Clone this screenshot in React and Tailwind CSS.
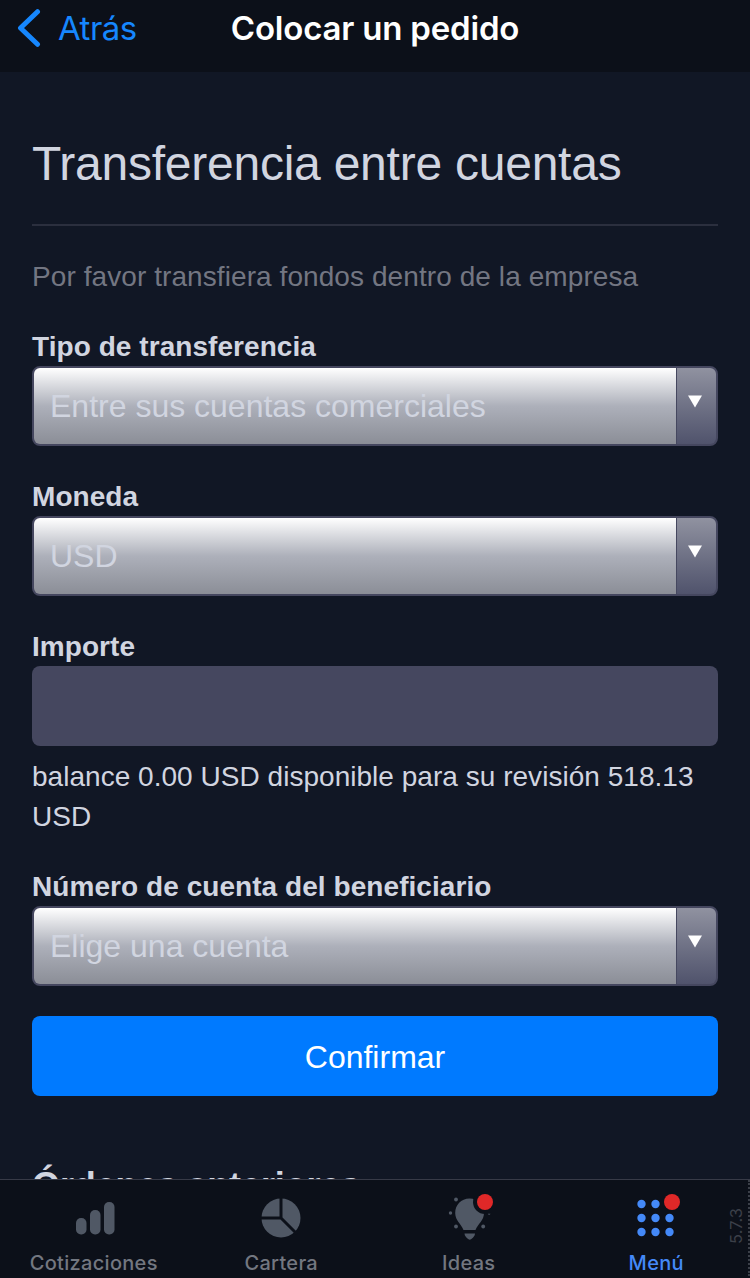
import { useState } from 'react';

const labelClass = "block h-10 pt-px leading-10 text-[28px] font-bold tracking-[0.06px] text-[#d1d5e0]";

const BarsIcon = () => (
  <svg width="44" height="44" viewBox="0 0 44 44" fill="currentColor">
    <rect x="4" y="22" width="10.500" height="16.500" rx="5" />
    <rect x="18" y="14" width="10.500" height="24.500" rx="5" />
    <rect x="32" y="6" width="10.500" height="32.500" rx="5" />
  </svg>
);

const PieIcon = () => (
  <svg width="44" height="44" viewBox="0 0 44 44">
    <circle cx="22" cy="22" r="19.500" fill="currentColor" />
    <path d="M22 0V22H0M22 22L38 38" fill="none" stroke="#0c1019" strokeWidth="3" />
  </svg>
);

const BulbIcon = () => (
  <svg width="44" height="44" viewBox="0 0 44 44" fill="currentColor">
    <path d="M22.500 2.500C14 2.500 8.200 9 8.200 17C8.200 24.500 14 27.500 16.500 34H28.500C31 27.500 37 24.500 37 17C37 9 31 2.500 22.500 2.500Z" />
    <path d="M17.500 37.500H28C28 40 26 41.500 25 42.500C24 44 21.500 44 20.500 42.500C19.500 41.500 17.500 40 17.500 37.500Z" />
    <circle cx="9" cy="3.500" r="1.900" />
    <circle cx="3.500" cy="17" r="1.700" />
    <circle cx="9" cy="30.500" r="1.900" />
    <circle cx="36.200" cy="30.500" r="1.900" />
    <circle cx="38" cy="6" r="12" fill="#0c1019" />
    <path d="M40.800 17.800H43.500A1.500 1.500 0 0 1 40.800 17.800Z" />
  </svg>
);

const GridIcon = () => (
  <svg width="44" height="44" viewBox="0 0 44 44" fill="currentColor">
    {[8, 22, 36].map((y) => [7.500, 21.500, 35.500].map((x) => <circle key={`${x}-${y}`} cx={x} cy={y} r="4.200" />))}
  </svg>
);

const tabs = [
  { id: 'quotes', label: 'Cotizaciones', icon: BarsIcon },
  { id: 'wallet', label: 'Cartera', icon: PieIcon },
  { id: 'ideas', label: 'Ideas', icon: BulbIcon, badge: true },
  { id: 'menu', label: 'Menú', icon: GridIcon, badge: true },
];

const SelectField = ({ label, value }) => (
  <div className="mb-[30px]">
    <label className={labelClass}>{label}</label>
    <button
      type="button"
      className="flex h-20 w-full overflow-hidden rounded-lg border-2 border-[#45475f] bg-[#45475f] text-left"
    >
      <span className="flex-1 bg-linear-to-b from-white via-[#adb0ba] via-50% to-[#8b8e97] pl-4 text-[32px] leading-[76px] text-[#d1d5e0]">
        {value}
      </span>
      <span className="flex w-10 border-l border-[#45475f] bg-linear-to-b from-[#9092a0] to-[#50536c] pt-[27px] pl-[11px]">
        <svg width="14" height="13" viewBox="0 0 14 13" fill="white"><path d="M0 0.500H14L7 12.500Z" /></svg>
      </span>
    </button>
  </div>
);

const App = () => {
  const [activeTab, setActiveTab] = useState('menu');
  const [amount, setAmount] = useState('');

  return (
    <div className="flex h-[1278px] w-[750px] flex-col overflow-hidden bg-[#111725] font-['Liberation_Sans',sans-serif] text-[#d1d5e0]">
      {/* Header */}
      <header className="grid h-[72px] shrink-0 grid-cols-[1fr_auto_1fr] items-start bg-[#0c1019] font-['Inter',sans-serif]">
        <button type="button" className="flex h-14 items-center pl-[17px] text-[#1687fe]">
          <svg width="24" height="38" viewBox="0 0 24 38" fill="none" stroke="currentColor" strokeWidth="5" strokeLinecap="round" strokeLinejoin="round">
            <path d="M20.500 2.700L3.500 19L20.500 35.300" />
          </svg>
          <span className="pt-0.5 pl-[17px] text-[33px] tracking-[-0.5px]">Atrás</span>
        </button>
        <h1 className="text-[33px] leading-14 font-semibold tracking-[-0.2px] text-white">Colocar un pedido</h1>
      </header>

      {/* Transfer form */}
      <main className="min-h-0 flex-1 overflow-hidden px-8">
        <h2 className="mt-[62px] h-[92px] border-b-2 border-[#2b2f3e] text-[48px] leading-[60px] tracking-[-0.24px] whitespace-nowrap">
          Transferencia entre cuentas
        </h2>
        <p className="mt-[31px] mb-[29px] text-[28px] leading-10 tracking-[0.08px] whitespace-nowrap text-[#737682]">
          Por favor transfiera fondos dentro de la empresa
        </p>

        <SelectField label="Tipo de transferencia" value="Entre sus cuentas comerciales" />
        <SelectField label="Moneda" value="USD" />

        <div className="mb-[29px]">
          <label className={labelClass}>Importe</label>
          <input
            className="block h-20 w-full rounded-lg bg-[#45475f] px-4 text-[32px] outline-none"
            value={amount}
            onChange={(e) => setAmount(e.target.value)}
          />
          <p className="mt-[11px] text-[28px] leading-10 tracking-[0.03px]">
            balance 0.00 USD disponible para su revisión 518.13 USD
          </p>
        </div>

        <SelectField label="Número de cuenta del beneficiario" value="Elige una cuenta" />

        <button type="button" className="h-20 w-full rounded-lg bg-[#007aff] pt-0.5 text-[32px] text-white">
          Confirmar
        </button>
        <h3 className="mt-[70px] text-[36px] leading-10 font-bold tracking-[-0.1px]">Órdenes anteriores</h3>
      </main>

      {/* Bottom tabs */}
      <nav className="relative grid h-[99px] shrink-0 grid-cols-4 border-t border-[#373a47] bg-[#0c1019] font-['Inter',sans-serif]">
        {tabs.map(({ id, label, icon: Icon, badge }) => (
          <button
            key={id}
            type="button"
            onClick={() => setActiveTab(id)}
            className={`flex flex-col items-center pt-4 ${activeTab === id ? 'text-[#4489f8]' : 'text-[#505865]'}`}
          >
            <span className="relative block">
              <Icon />
              {badge && <span className="absolute -top-[2px] left-[30px] h-4 w-4 rounded-full bg-[#e02828]" />}
            </span>
            <span className={`mt-[11px] text-[20px] leading-6 font-medium tracking-[0.3px] ${activeTab === id ? '' : 'text-[#737780]'}`}>
              {label}
            </span>
          </button>
        ))}
        <span className="absolute top-[28px] right-[6px] text-[16.5px] leading-4 text-[#3b3f48] [writing-mode:vertical-rl] rotate-180">
          5.7.3
        </span>
        <span className="absolute top-0 right-0 h-24 border-r-2 border-dotted border-[#3b3f48]" />
      </nav>
    </div>
  );
};

export default App;
